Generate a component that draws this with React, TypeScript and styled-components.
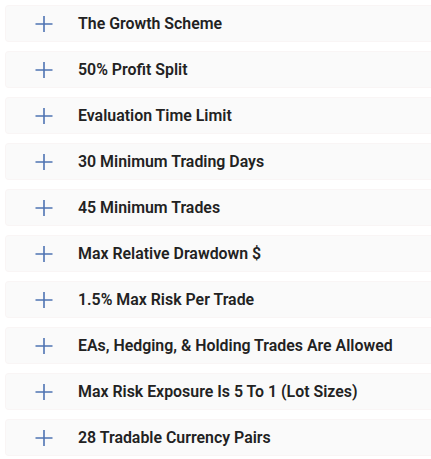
import { createGlobalStyle, styled } from 'styled-components';

const items = [
  'The Growth Scheme',
  '50% Profit Split',
  'Evaluation Time Limit',
  '30 Minimum Trading Days',
  '45 Minimum Trades',
  'Max Relative Drawdown $',
  '1.5% Max Risk Per Trade',
  'EAs, Hedging, & Holding Trades Are Allowed',
  'Max Risk Exposure Is 5 To 1 (Lot Sizes)',
  '28 Tradable Currency Pairs',
];

const PlusIcon = () => (
  <svg width="18" height="18" viewBox="0 0 18 18" fill="none">
    <path d="M9 1v16M0.5 9h17" stroke="#4f74b3" strokeWidth="1.6" />
  </svg>
);

const App = () => {
  return (
    <>
      <GlobalStyle />
      <List>
        {items.map((item) => (
          <Row key={item}>
            <IconWrap>
              <PlusIcon />
            </IconWrap>
            <Title>{item}</Title>
          </Row>
        ))}
      </List>
    </>
  );
};
export default App;

const GlobalStyle = createGlobalStyle`
  body {
    margin: 0;
    background: #ffffff;
    font-family: Roboto, "Liberation Sans", sans-serif;
  }
`;

const List = styled.div`
  display: flex;
  flex-direction: column;
  gap: 9px;
  padding: 5px 0 0 5px;
`;

const Row = styled.div`
  display: flex;
  align-items: center;
  height: 37px;
  padding-left: 29px;
  background-color: #fafafa;
  border: 1px solid #f9f5f5;
  border-right: none;
  border-radius: 4px 0 0 4px;
  box-sizing: border-box;
`;

const IconWrap = styled.span`
  display: flex;
  width: 18px;
  height: 18px;
  margin-right: 25px;
`;

const Title = styled.span`
  font-size: 15.9px;
  font-weight: 600;
  color: #222222;
`;
